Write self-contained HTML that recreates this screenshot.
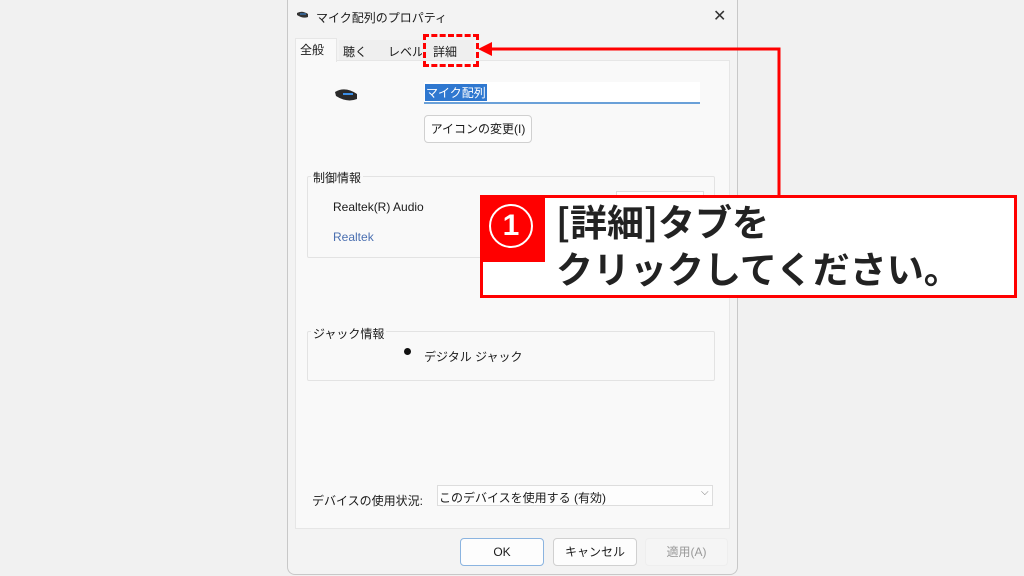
<!DOCTYPE html>
<html><head><meta charset="utf-8"><style>
body{margin:0;width:1024px;height:576px;background:#f1f1f1;position:relative;overflow:hidden;font-family:"Liberation Sans","Noto Sans CJK JP",sans-serif;font-size:12px;color:#1a1a1a}
.a{position:absolute}
.dlg{left:287px;top:0;width:449px;height:574px;background:#f3f3f3;border:1px solid #c8c8c8;border-top:none;border-radius:0 0 8px 8px}
.panel{left:295px;top:60px;width:433px;height:467px;background:#f9f9f9;border:1px solid #e6e6e6}
.btn{background:#fdfdfd;border:1px solid #d0d0d0;border-radius:4px;text-align:center;box-sizing:border-box}
.grp{border:1px solid #e3e3e3;border-radius:2px}
</style></head><body>
<div class="a dlg"></div>
<svg class="a" style="left:296px;top:10px" width="14" height="10"><path d="M1 3 Q6 0 12 4 L12 7 Q7 9 1 5Z" fill="#333"/><path d="M4 4h6" stroke="#3a8ee6" stroke-width="1"/></svg>
<div class="a" style="left:316px;top:9px;font-size:12px">マイク配列のプロパティ</div>
<div class="a" style="left:713px;top:6px;font-size:16px;color:#333">✕</div>
<div class="a panel"></div>
<div class="a" style="left:295px;top:38px;width:40px;height:23px;background:#f9f9f9;border:1px solid #e6e6e6;border-bottom:none"></div>
<div class="a" style="left:300px;top:41px">全般</div>
<div class="a" style="left:339px;top:40px;width:48px;height:20px;background:#efefef"></div>
<div class="a" style="left:343px;top:43px">聴く</div>
<div class="a" style="left:385px;top:40px;width:36px;height:20px;background:#efefef"></div>
<div class="a" style="left:388px;top:43px">レベル</div>
<div class="a" style="left:422px;top:40px;width:52px;height:20px;background:#efefef"></div>
<div class="a" style="left:433px;top:43px">詳細</div>
<div class="a" style="left:423px;top:34px;width:50px;height:27px;border:3px dashed #f00"></div>
<svg class="a" style="left:333px;top:86px" width="28" height="18"><path d="M2 6 Q12 0 24 8 L24 13 Q14 17 3 10Z" fill="#2a2a2a"/><path d="M10 8h10" stroke="#3a8ee6" stroke-width="2"/></svg>
<div class="a" style="left:424px;top:82px;width:276px;height:20px;background:#fff;border-bottom:2px solid #6aa0d8"></div>
<div class="a" style="left:425px;top:84px;background:#2f78d0;color:#fff;padding:0 1px">マイク配列</div>
<div class="a btn" style="left:424px;top:115px;width:108px;height:28px;line-height:26px">アイコンの変更(I)</div>
<div class="a grp" style="left:307px;top:176px;width:406px;height:80px"></div>
<div class="a" style="left:311px;top:169px;background:#f9f9f9;padding:0 2px">制御情報</div>
<div class="a" style="left:333px;top:200px">Realtek(R) Audio</div>
<div class="a" style="left:333px;top:230px;color:#4a6fb0">Realtek</div>
<div class="a grp" style="left:307px;top:331px;width:406px;height:48px"></div>
<div class="a" style="left:311px;top:325px;background:#f9f9f9;padding:0 2px">ジャック情報</div>
<div class="a" style="left:404px;top:348px;width:7px;height:7px;border-radius:50%;background:#111"></div>
<div class="a" style="left:424px;top:348px">デジタル ジャック</div>
<div class="a" style="left:312px;top:492px">デバイスの使用状況:</div>
<div class="a" style="left:437px;top:485px;width:276px;height:21px;background:#fdfdfd;border:1px solid #ddd;box-sizing:border-box"></div>
<div class="a" style="left:439px;top:489px">このデバイスを使用する (有効)</div>
<div class="a" style="left:701px;top:487px;color:#777;font-size:10px">⌵</div>
<div class="a btn" style="left:460px;top:538px;width:84px;height:28px;line-height:26px;border-color:#8bb4e0">OK</div>
<div class="a btn" style="left:553px;top:538px;width:84px;height:28px;line-height:26px">キャンセル</div>
<div class="a btn" style="left:645px;top:538px;width:83px;height:28px;line-height:26px;background:#f5f5f5;border-color:#eee;color:#999">適用(A)</div>
<svg class="a" style="left:0;top:0" width="1024" height="576"><path d="M490 49H779V197" fill="none" stroke="#f00" stroke-width="3"/><path d="M478 49l14 -7v14z" fill="#f00"/></svg>
<div class="a" style="left:616px;top:191px;width:86px;height:22px;background:#fff;border:1px solid #ddd"></div>
<div class="a" style="left:480px;top:195px;width:537px;height:103px;box-sizing:border-box;border:3px solid #f00;background:#fff"></div>
<div class="a" style="left:480px;top:195px;width:65px;height:67px;background:#f00"></div>
<div class="a" style="left:489px;top:204px;width:40px;height:40px;border:2px solid #fff;border-radius:50%;color:#fff;font-size:30px;font-weight:bold;text-align:center;line-height:40px">1</div>
<div class="a" style="left:556px;top:197px;font-size:37px;font-weight:bold;color:#222;line-height:47px;font-family:'Noto Sans CJK JP',sans-serif">[詳細]タブを<br>クリックしてください。</div>
</body></html>
